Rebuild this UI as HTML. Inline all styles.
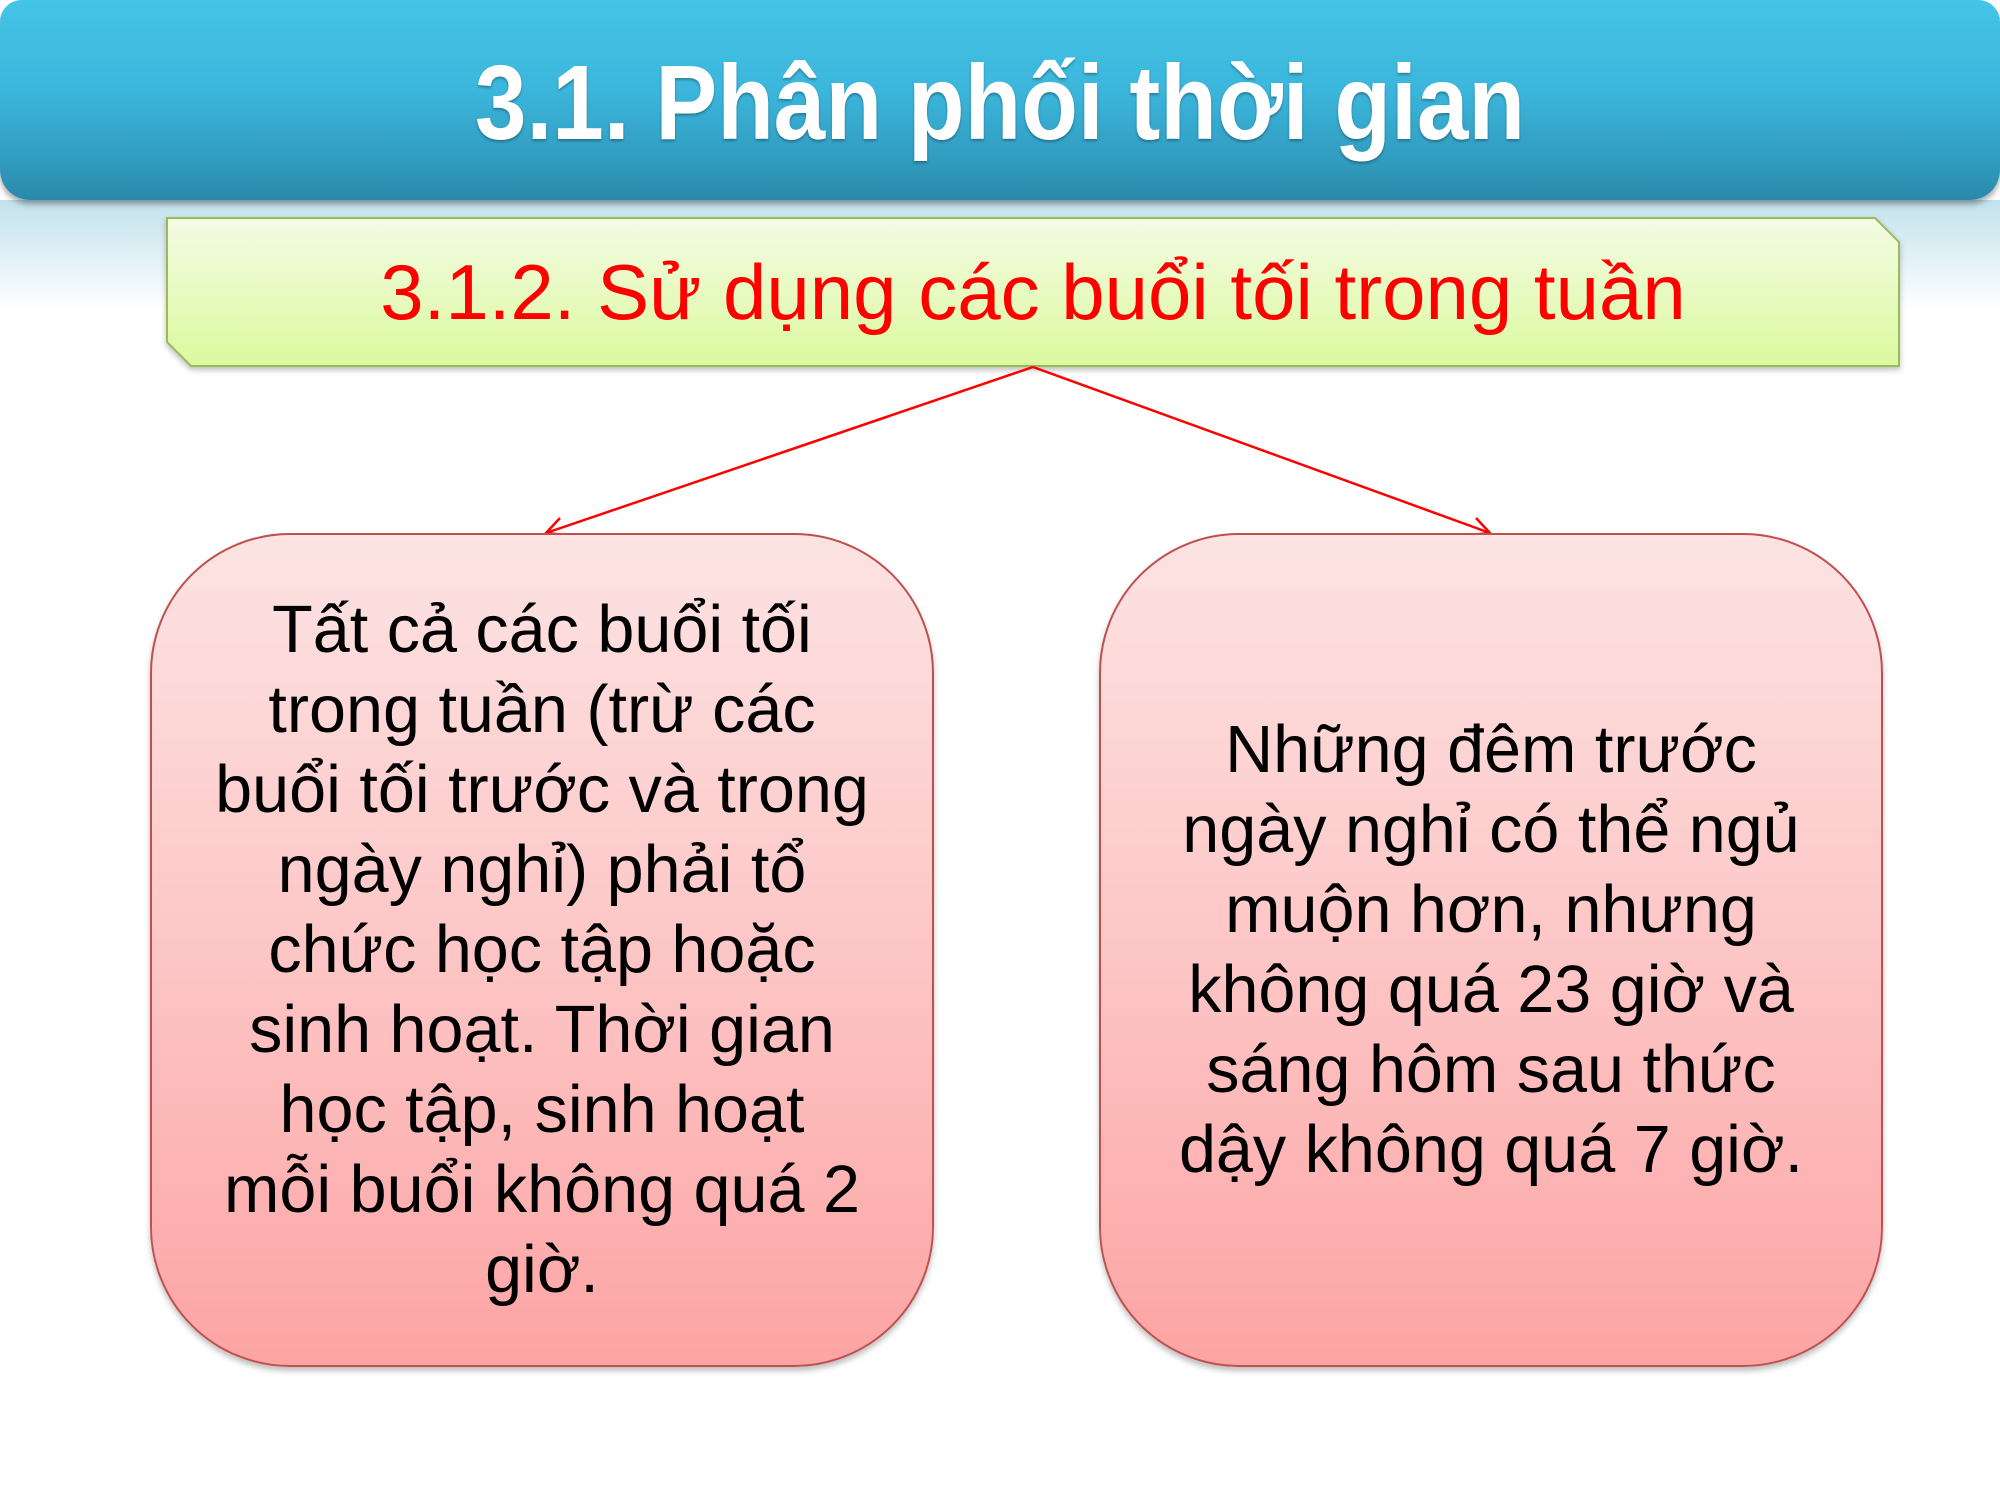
<!DOCTYPE html>
<html><head><meta charset="utf-8"><style>
body{margin:0;width:2000px;height:1500px;background:#fff;position:relative;overflow:hidden;font-family:"Liberation Sans",Arial,sans-serif}
.hdr{position:absolute;left:0;top:0;width:2000px;height:200px;border-radius:22px 22px 30px 30px;background:linear-gradient(#44c4e6 0%,#3cb6dc 45%,#2f98bb 85%,#2a88aa 100%);box-shadow:0 4px 6px rgba(0,0,0,.35)}
.refl{position:absolute;left:0;top:200px;width:2000px;height:110px;background:linear-gradient(rgba(120,190,215,.45),rgba(255,255,255,0))}
.title{position:absolute;left:0;top:48px;width:2000px;text-align:center;color:#fff;font-weight:bold;font-size:106px;line-height:110px;text-shadow:0 2px 3px rgba(0,0,0,.3);transform:scaleX(0.875)}
.sub{position:absolute;left:166px;top:217px;width:1734px;height:150px}
.subt{position:absolute;left:166px;top:247px;width:1734px;text-align:center;color:#f00;font-size:78px;line-height:90px}
.box{position:absolute;top:533px;width:784px;height:834px;box-sizing:border-box;border:2px solid #c0504d;border-radius:140px;background:linear-gradient(#fde3e3,#fdc6c6 50%,#fda4a4);box-shadow:0 4px 6px rgba(0,0,0,.25);display:flex;align-items:center;justify-content:center;text-align:center;font-size:66.5px;line-height:80px;color:#000;white-space:nowrap}
</style></head><body>
<div class="refl"></div>
<div class="hdr"></div>
<div class="title">3.1. Phân phối thời gian</div>
<svg class="sub" viewBox="0 0 1734 150" width="1734" height="150" style="overflow:visible">
<defs><linearGradient id="g" x1="0" y1="0" x2="0" y2="1"><stop offset="0" stop-color="#f4fbe4"/><stop offset="1" stop-color="#dbfa9e"/></linearGradient></defs>
<polygon points="1,1 1709,1 1733,25 1733,149 25,149 1,125" fill="url(#g)" stroke="#9bbb59" stroke-width="2" style="filter:drop-shadow(0 3px 3px rgba(0,0,0,.25))"/>
</svg>
<div class="subt">3.1.2. Sử dụng các buổi tối trong tuần</div>
<svg style="position:absolute;left:0;top:0" width="2000" height="1500">
<g stroke="#f00" stroke-width="2.5" fill="none">
<line x1="1033" y1="367" x2="546" y2="533"/>
<line x1="1033" y1="367" x2="1490" y2="533"/>
<polyline points="560,518 546,533 566,535"/>
<polyline points="1470,535 1490,533 1476,518"/>
</g></svg>
<div class="box" style="left:150px">Tất cả các buổi tối<br>trong tuần (trừ các<br>buổi tối trước và trong<br>ngày nghỉ) phải tổ<br>chức học tập hoặc<br>sinh hoạt. Thời gian<br>học tập, sinh hoạt<br>mỗi buổi không quá 2<br>giờ.</div>
<div class="box" style="left:1099px">Những đêm trước<br>ngày nghỉ có thể ngủ<br>muộn hơn, nhưng<br>không quá 23 giờ và<br>sáng hôm sau thức<br>dậy không quá 7 giờ.</div>
</body></html>
